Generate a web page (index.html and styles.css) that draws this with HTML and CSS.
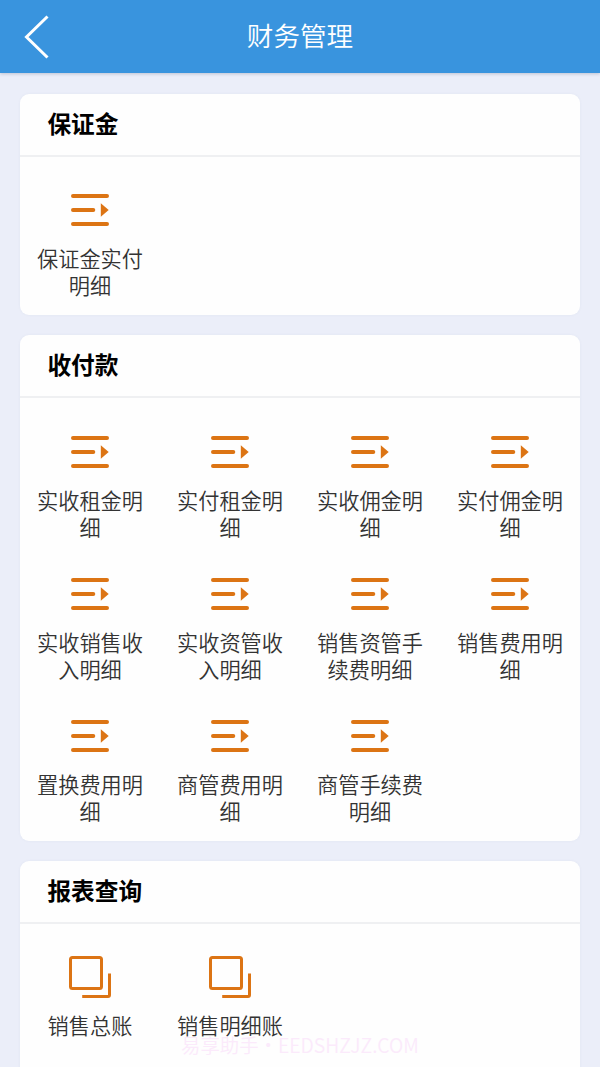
FILE: index.html
```html
<!DOCTYPE html>
<html lang="zh-CN">
<head>
<meta charset="utf-8">
<title>财务管理</title>
<link rel="stylesheet" href="styles.css">
</head>
<body>
<svg class="defs" width="0" height="0">
  <symbol id="list" viewBox="0 0 42 42">
    <path d="M4 7H38M4 21H24.3M4 35H38" fill="none" stroke="currentColor" stroke-width="4" stroke-linecap="round"/>
    <path d="M31.8 14.3L39.7 21L31.8 27.7Z" fill="currentColor"/>
  </symbol>
  <symbol id="copy" viewBox="0 0 42 42">
    <rect x="1.5" y="1.5" width="31" height="31" rx="2" fill="none" stroke="currentColor" stroke-width="3"/>
    <path d="M40.5 17.5V39Q40.5 40.5 39 40.5H13.2" fill="none" stroke="currentColor" stroke-width="3"/>
  </symbol>
</svg>
<header class="topbar">
  <svg class="back" viewBox="0 0 26 46"><path d="M23.5 2.5L2.5 23L23.5 43.5" fill="none" stroke="#fff" stroke-width="3"/></svg>
  <h1 class="title">财务管理</h1>
</header>
<main class="content">
  <section class="card">
    <h2 class="card-title">保证金</h2>
    <div class="grid">
      <a class="item"><svg class="icon"><use href="#list"/></svg><span class="label">保证金实付明细</span></a>
    </div>
  </section>
  <section class="card">
    <h2 class="card-title">收付款</h2>
    <div class="grid">
      <a class="item"><svg class="icon"><use href="#list"/></svg><span class="label">实收租金明细</span></a>
      <a class="item"><svg class="icon"><use href="#list"/></svg><span class="label">实付租金明细</span></a>
      <a class="item"><svg class="icon"><use href="#list"/></svg><span class="label">实收佣金明细</span></a>
      <a class="item"><svg class="icon"><use href="#list"/></svg><span class="label">实付佣金明细</span></a>
      <a class="item"><svg class="icon"><use href="#list"/></svg><span class="label">实收销售收入明细</span></a>
      <a class="item"><svg class="icon"><use href="#list"/></svg><span class="label">实收资管收入明细</span></a>
      <a class="item"><svg class="icon"><use href="#list"/></svg><span class="label">销售资管手续费明细</span></a>
      <a class="item"><svg class="icon"><use href="#list"/></svg><span class="label">销售费用明细</span></a>
      <a class="item"><svg class="icon"><use href="#list"/></svg><span class="label">置换费用明细</span></a>
      <a class="item"><svg class="icon"><use href="#list"/></svg><span class="label">商管费用明细</span></a>
      <a class="item"><svg class="icon"><use href="#list"/></svg><span class="label">商管手续费明细</span></a>
    </div>
  </section>
  <section class="card">
    <h2 class="card-title">报表查询</h2>
    <div class="grid">
      <a class="item"><svg class="icon"><use href="#copy"/></svg><span class="label">销售总账</span></a>
      <a class="item"><svg class="icon"><use href="#copy"/></svg><span class="label">销售明细账</span></a>
    </div>
  </section>
</main>
<div class="watermark">易享助手·EEDSHZJZ.COM</div>
</body>
</html>
```

FILE: styles.css
```css
* { box-sizing: border-box; }
body {
  margin: 0;
  height: 1067px;
  overflow: hidden;
  position: relative;
  background: #ebeef9;
  font-family: "Noto Sans CJK SC", sans-serif;
  color: #333;
}
.defs { display: block; position: absolute; }
.topbar {
  display: grid;
  grid-template-columns: 60px 1fr 60px;
  align-items: center;
  height: 73px;
  background: #3994de;
  box-shadow: 0 1px 3px rgba(60, 70, 100, .25);
}
.back { width: 26px; height: 46px; margin-left: 24px; }
.title {
  margin: 0;
  padding-bottom: 3px;
  text-align: center;
  color: #fff;
  font-size: 26.6px;
  font-weight: 350;
  line-height: 40px;
}
.content {
  display: flex;
  flex-direction: column;
  gap: 20px;
  padding: 20.6px 20px 0;
}
.card {
  background: #fefefe;
  border-radius: 9px;
  box-shadow: 0 0 3px rgba(90, 100, 140, .06);
}
.card-title {
  margin: 0;
  height: 63px;
  padding-left: 27.4px;
  border-bottom: 2px solid #eff0f2;
  color: #000;
  font-size: 23.7px;
  font-weight: 700;
  line-height: 58.6px;
}
.grid {
  display: grid;
  grid-template-columns: repeat(4, 1fr);
  grid-auto-rows: 142px;
  padding: 14.6px 0 2px;
}
.item {
  display: flex;
  flex-direction: column;
  align-items: center;
  gap: 13px;
  padding: 18px 16px 0;
}
.icon { width: 42px; height: 42px; flex: none; color: #dc7414; }
.label {
  font-size: 21.2px;
  font-weight: 350;
  line-height: 27px;
  text-align: center;
}
.watermark {
  position: absolute;
  left: 181px;
  top: 1030px;
  color: #fbeafb;
  font-size: 19.4px;
  font-weight: 350;
  line-height: 29px;
  white-space: nowrap;
}
```
